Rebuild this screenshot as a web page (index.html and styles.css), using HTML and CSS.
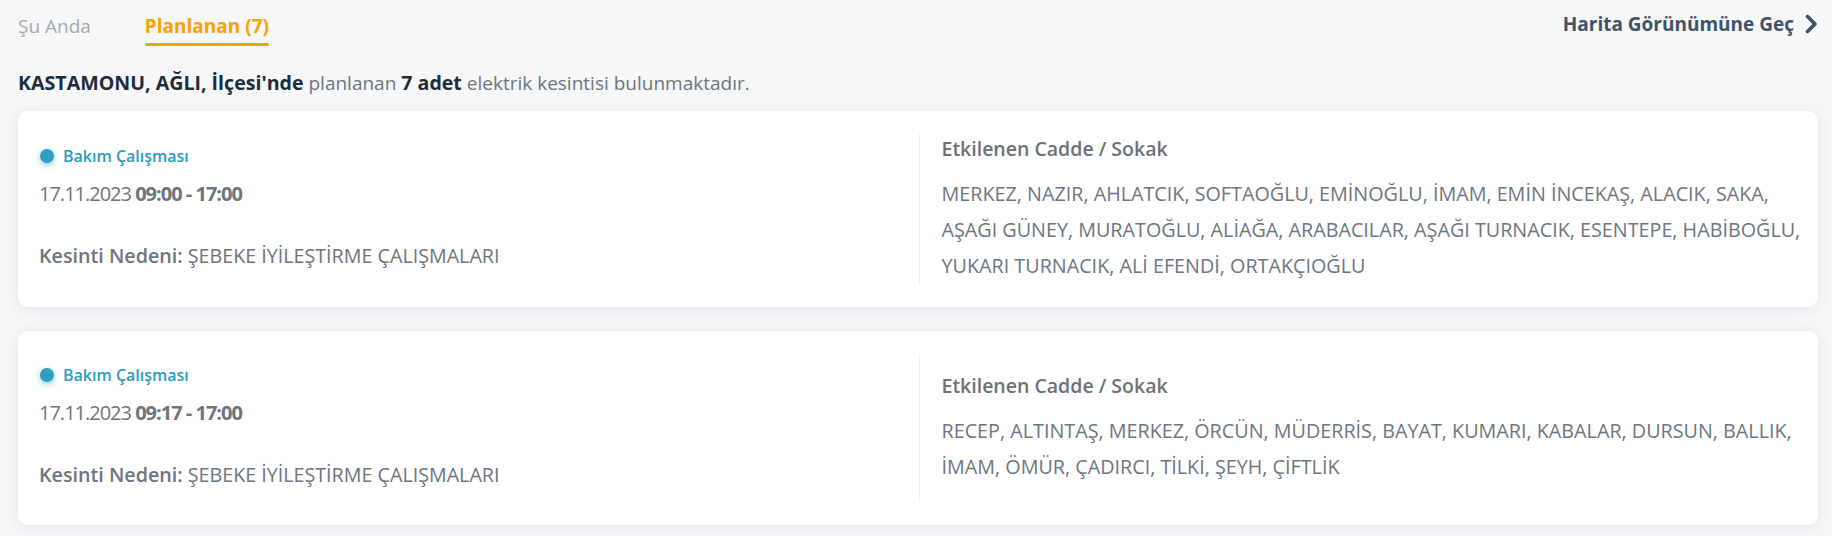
FILE: index.html
```html
<!DOCTYPE html>
<html lang="tr">
<head>
<meta charset="utf-8">
<title>Planlanan Kesintiler</title>
<link rel="stylesheet" href="styles.css">
</head>
<body>
<div class="page">
  <div class="topbar">
    <div class="tabs">
      <div class="tab">Şu Anda</div>
      <div class="tab active">Planlanan (7)</div>
    </div>
    <a class="maplink" href="#">Harita Görünümüne Geç
      <svg class="chev" width="13" height="20" viewBox="0 0 13 20" aria-hidden="true"><polyline points="2.5,2.5 10,10 2.5,17.5" fill="none" stroke="#3e5368" stroke-width="3.6" stroke-linecap="round" stroke-linejoin="round"/></svg>
    </a>
  </div>

  <p class="summary"><b>KASTAMONU, AĞLI, İlçesi'nde</b> planlanan <b>7 adet</b> elektrik kesintisi bulunmaktadır.</p>

  <div class="card">
    <div class="info">
      <div class="badge"><span class="dot"></span>Bakım Çalışması</div>
      <div class="date">17.11.2023 <b>09:00 - 17:00</b></div>
      <div class="reason"><b>Kesinti Nedeni:</b> ŞEBEKE İYİLEŞTİRME ÇALIŞMALARI</div>
    </div>
    <div class="streets">
      <div class="streets-title">Etkilenen Cadde / Sokak</div>
      <div class="streets-list">MERKEZ, NAZIR, AHLATCIK, SOFTAOĞLU, EMİNOĞLU, İMAM, EMİN İNCEKAŞ, ALACIK, SAKA, AŞAĞI GÜNEY, MURATOĞLU, ALİAĞA, ARABACILAR, AŞAĞI TURNACIK, ESENTEPE, HABİBOĞLU, YUKARI TURNACIK, ALİ EFENDİ, ORTAKÇIOĞLU</div>
    </div>
  </div>

  <div class="card">
    <div class="info">
      <div class="badge"><span class="dot"></span>Bakım Çalışması</div>
      <div class="date">17.11.2023 <b>09:17 - 17:00</b></div>
      <div class="reason"><b>Kesinti Nedeni:</b> ŞEBEKE İYİLEŞTİRME ÇALIŞMALARI</div>
    </div>
    <div class="streets">
      <div class="streets-title">Etkilenen Cadde / Sokak</div>
      <div class="streets-list">RECEP, ALTINTAŞ, MERKEZ, ÖRCÜN, MÜDERRİS, BAYAT, KUMARI, KABALAR, DURSUN, BALLIK, İMAM, ÖMÜR, ÇADIRCI, TİLKİ, ŞEYH, ÇİFTLİK</div>
    </div>
  </div>
</div>
</body>
</html>
```

FILE: styles.css
```css
html, body {
  margin: 0;
  padding: 0;
  background: #f6f7f9;
}

body {
  font-family: "Open Sans", "Noto Sans", sans-serif;
  color: #6c757d;
}

.page {
  padding: 0 14px 0 18px;
}

.topbar {
  display: flex;
  justify-content: space-between;
  align-items: flex-start;
}

.tabs {
  display: flex;
  gap: 54px;
}

.tab {
  position: relative;
  padding: 12px 0 6px;
  font-size: 19px;
  line-height: 28px;
  color: #a4a9ae;
}

.tab.active {
  color: #ffa000;
  font-weight: 700;
}

.tab.active::after {
  content: "";
  position: absolute;
  left: 0;
  right: 0;
  bottom: 0;
  height: 3px;
  border-radius: 2px;
  background: #ffa000;
}

.maplink {
  display: flex;
  align-items: center;
  gap: 11px;
  padding-top: 10px;
  font-size: 19px;
  line-height: 28px;
  font-weight: 700;
  color: #3e5368;
  text-decoration: none;
}

.chev {
  display: block;
}

.summary {
  margin: 22px 0 13px;
  font-size: 19px;
  line-height: 30px;
  color: #6c757d;
}

.summary b {
  font-size: 19.6px;
  color: #1d2c3a;
  font-weight: 700;
}

.card {
  display: grid;
  grid-template-columns: 1fr 1fr;
  margin-bottom: 24px;
  padding: 23px 20px 23px 21px;
  background: #ffffff;
  border-radius: 10px;
  box-shadow: 0 2px 16px rgba(20, 30, 45, 0.08);
}

.info {
  align-self: center;
  display: flex;
  flex-direction: column;
  padding-top: 2px;
}

.badge {
  display: flex;
  align-items: center;
  gap: 9px;
  margin-top: 6px;
  font-size: 16px;
  line-height: 26px;
  font-weight: 600;
  color: #2b9bbf;
}

.dot {
  width: 14px;
  height: 14px;
  margin-left: 1px;
  border-radius: 50%;
  background: #2e9fc2;
  box-shadow: 0 2px 6px rgba(46, 159, 194, 0.55);
}

.date {
  margin-top: 10px;
  font-size: 20px;
  line-height: 30px;
  color: #6c757d;
  letter-spacing: -1px;
}

.date b {
  font-weight: 700;
}

.reason {
  margin: 32px 0 12px;
  font-size: 19.7px;
  line-height: 30px;
  color: #6c757d;
}

.reason b {
  font-weight: 600;
}

.streets {
  display: flex;
  flex-direction: column;
  justify-content: center;
  padding-left: 22px;
  border-left: 1px solid #eeeeee;
}

.streets-title {
  margin-bottom: 12px;
  font-size: 19.5px;
  line-height: 30px;
  font-weight: 600;
  color: #6b7178;
}

.streets-list {
  margin-right: -14px;
  font-size: 19.75px;
  line-height: 36px;
  color: #6c7680;
}
```
